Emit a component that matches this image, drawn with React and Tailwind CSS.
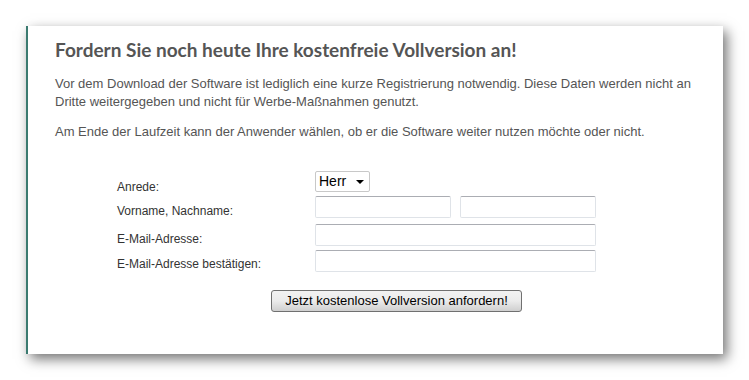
export default function App() {
  return (
    <div className="w-[749px] h-[380px] bg-white relative overflow-hidden" style={{ fontFamily: '"Liberation Sans", Arial, sans-serif' }}>
      <div className="ml-[26px] mt-[26px] w-[697px] h-[328px] bg-white border-l-2 border-[#3b7a70] shadow-[4px_5px_12px_rgba(0,0,0,0.55)] pl-[27px] pt-[12px]">
        <h1 className="text-[19px] font-bold text-[#555] leading-[24px]" style={{ fontFamily: 'Lato, "Open Sans", sans-serif' }}>
          Fordern Sie noch heute Ihre kostenfreie Vollversion an!
        </h1>
        <p className="mt-[13px] w-[645px] text-[13px] leading-[18px] text-[#555]">
          Vor dem Download der Software ist lediglich eine kurze Registrierung notwendig. Diese Daten werden nicht an Dritte weitergegeben und nicht für Werbe-Maßnahmen genutzt.
        </p>
        <p className="mt-[12px] text-[13px] leading-[18px] text-[#555]">
          Am Ende der Laufzeit kann der Anwender wählen, ob er die Software weiter nutzen möchte oder nicht.
        </p>
        <div className="mt-[30px] ml-[62px] grid grid-cols-[198px_auto] text-[12px] text-[#333]">
          <div className="pt-[7px] h-[25px]">Anrede:</div>
          <div className="h-[25px]">
            <div className="w-[55px] h-[21px] border border-[#c8c8c8] rounded-[2px] flex items-center justify-between pl-[3px] pr-[5px] text-[14px] text-black">
              <span>Herr</span>
              <svg width="8" height="4" viewBox="0 0 8 4"><path d="M0 0H8L4 4Z" fill="#000" /></svg>
            </div>
          </div>
          <div className="pt-[6px] h-[28px]">Vorname, Nachname:</div>
          <div className="flex gap-[9px] h-[28px]">
            <input className="w-[136px] h-[22px] border border-[#dfe3e8] border-t-[#abadb3] rounded-[2px] outline-none" />
            <input className="w-[136px] h-[22px] border border-[#dfe3e8] border-t-[#abadb3] rounded-[2px] outline-none" />
          </div>
          <div className="pt-[6px] h-[26px]">E-Mail-Adresse:</div>
          <div className="h-[26px]">
            <input className="w-[281px] h-[22px] border border-[#dfe3e8] border-t-[#abadb3] rounded-[2px] outline-none" />
          </div>
          <div className="pt-[5px]">E-Mail-Adresse bestätigen:</div>
          <div>
            <input className="w-[281px] h-[22px] border border-[#dfe3e8] border-t-[#abadb3] rounded-[2px] outline-none" />
          </div>
        </div>
        <div className="mt-[15px] ml-[216px]">
          <button className="w-[251px] h-[22px] border border-[#707070] rounded-[3px] bg-gradient-to-b from-[#f2f2f2] via-[#ebebeb] to-[#cfcfcf] text-[13px] text-black leading-[18px]">
            Jetzt kostenlose Vollversion anfordern!
          </button>
        </div>
      </div>
    </div>
  );
}
